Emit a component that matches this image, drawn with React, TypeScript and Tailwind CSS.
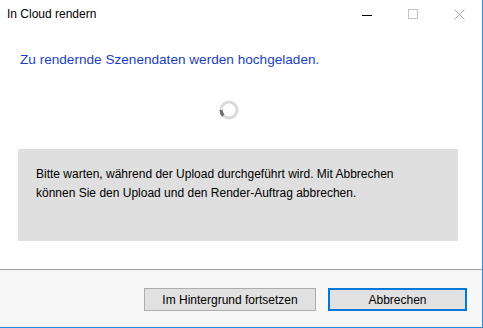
import React from 'react';

const font = { fontFamily: '"Segoe UI", "Liberation Sans", Arial, sans-serif' };

const Spinner = () => (
  <svg width="20" height="20" viewBox="0 0 20 20">
    <circle cx="10" cy="10" r="8" fill="none" stroke="#dadada" strokeWidth="3" />
    {/* dark arc on the lower left */}
    <path d="M 2 10 A 8 8 0 0 0 4.34 15.66" fill="none" stroke="#6b6b6b" strokeWidth="3" />
  </svg>
);

export default function App() {
  return (
    <div
      className="w-[483px] h-[328px] bg-white flex flex-col border-r border-b border-[#2b8ad9] overflow-hidden text-black"
      style={font}
    >
      {/* Title bar */}
      <div className="h-[30px] flex items-center shrink-0">
        <div className="flex-1 pl-[7px] text-[12px] leading-none pb-[2px]">In Cloud rendern</div>
        <div className="w-[46px] h-full flex items-center justify-center">
          <div className="w-[10px] h-px bg-black" />
        </div>
        <div className="w-[46px] h-full flex items-center justify-center pb-[2px]">
          <div className="w-[10px] h-[10px] border border-[#c4c4c4]" />
        </div>
        <div className="w-[46px] h-full flex items-center justify-center pb-[2px]">
          <svg width="11" height="11" viewBox="0 0 11 11">
            <path d="M0.5 0.5 L10.5 10.5 M10.5 0.5 L0.5 10.5" stroke="#a8a8a8" strokeWidth="1" />
          </svg>
        </div>
      </div>

      {/* Content */}
      <div className="flex-1 flex flex-col">
        <div className="pl-[20px] pt-[20px] text-[13.6px] leading-[20px] text-[#1b3fbc]">
          Zu rendernde Szenendaten werden hochgeladen.
        </div>
        <div className="flex pt-[30px] pl-[219px]">
          <Spinner />
        </div>
        <div className="mt-[29px] ml-[18px] w-[440px] h-[92px] bg-[#dfdfdf] pl-[18px] pt-[16px] pr-[40px] text-[12px] leading-[19px]">
          Bitte warten, während der Upload durchgeführt wird. Mit Abbrechen
          <br />
          können Sie den Upload und den Render-Auftrag abbrechen.
        </div>
      </div>

      {/* Footer */}
      <div className="h-[58px] shrink-0 bg-[#f7f7f7] border-t border-[#a0a0a0] flex justify-end items-start pt-[18px] pr-[15px] gap-[12px]">
        <button className="w-[172px] h-[23px] bg-[#e1e1e1] border border-[#adadad] text-[12px] leading-none text-black">
          Im Hintergrund fortsetzen
        </button>
        <button className="w-[139px] h-[23px] bg-[#e1e1e1] border-2 border-[#0078d7] text-[12px] leading-none text-black">
          Abbrechen
        </button>
      </div>
    </div>
  );
}
